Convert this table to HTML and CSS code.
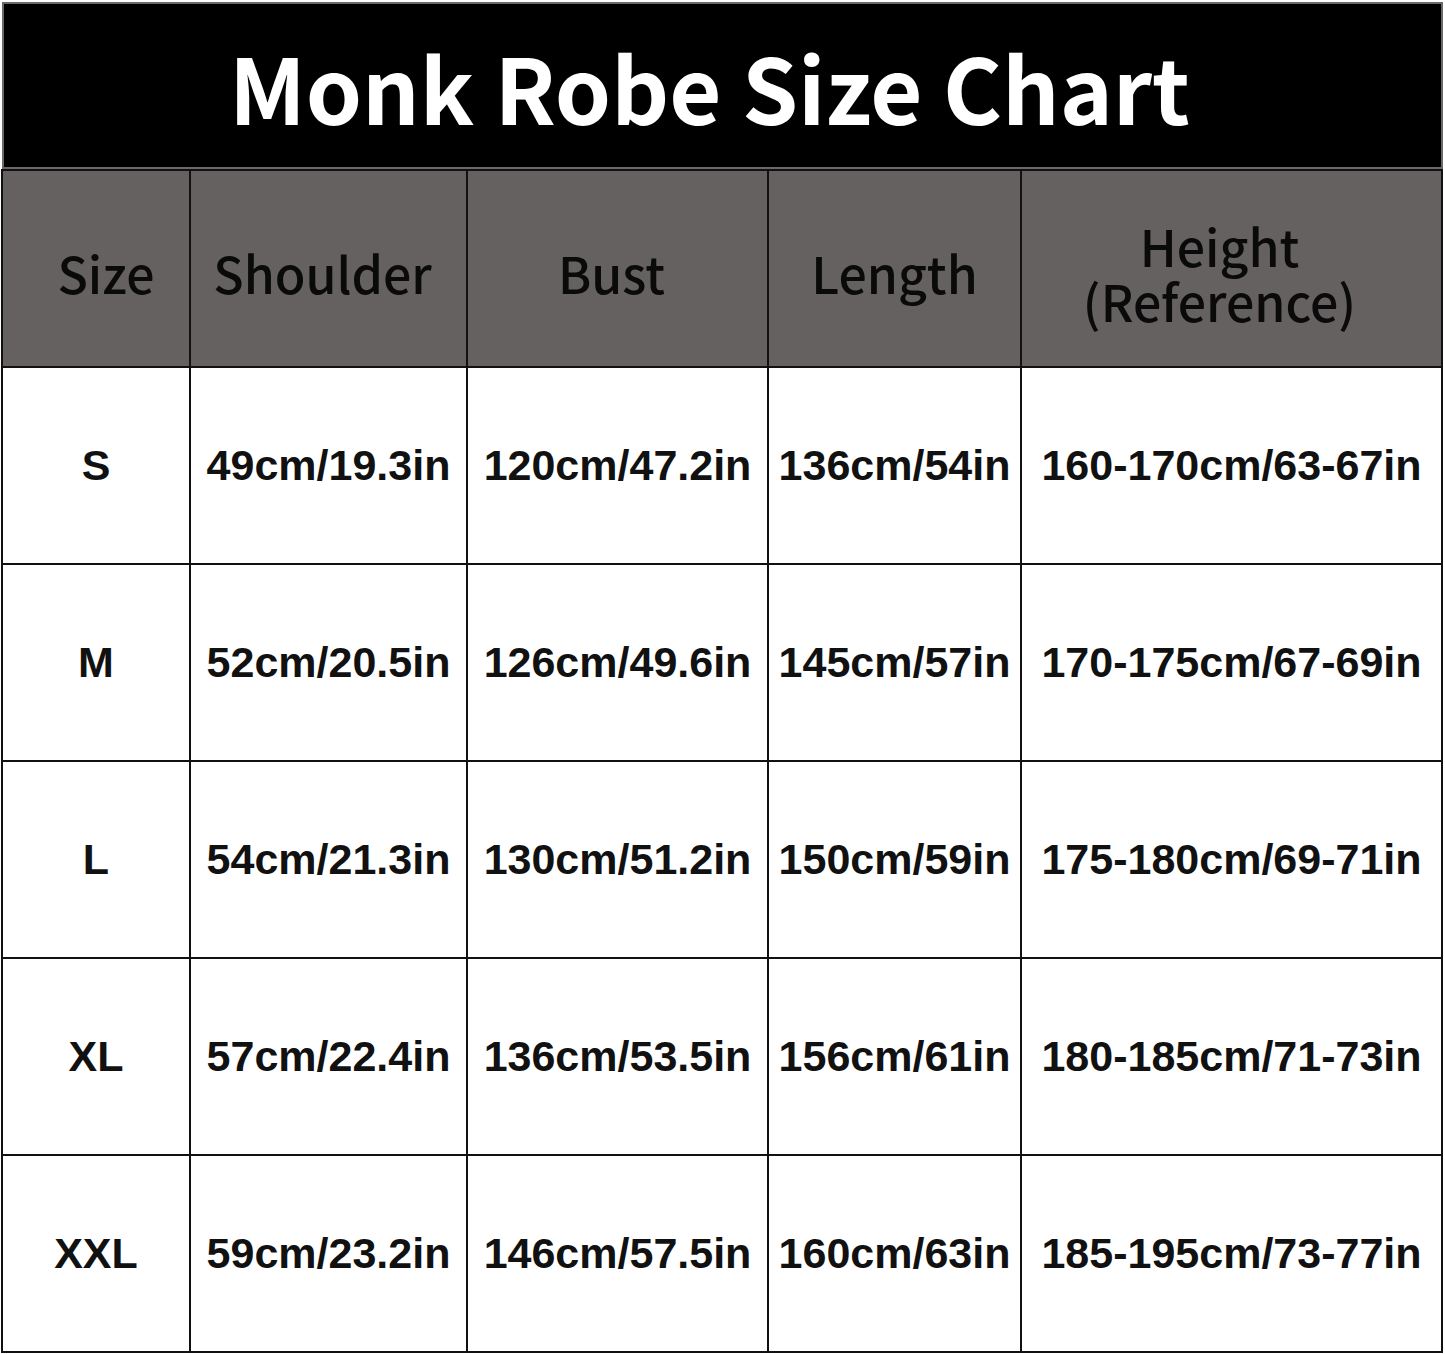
FILE: index.html
```html
<!DOCTYPE html>
<html>
<head>
<meta charset="utf-8">
<link rel="stylesheet" href="styles.css">
</head>
<body>
<div class="chart">
  <div class="title">Monk Robe Size Chart</div>
  <div class="grid">
    <div class="cell head c1">Size</div>
    <div class="cell head c2">Shoulder</div>
    <div class="cell head c3">Bust</div>
    <div class="cell head c4">Length</div>
    <div class="cell head c5">Height<br>(Reference)</div>

    <div class="cell">S</div>
    <div class="cell">49cm/19.3in</div>
    <div class="cell">120cm/47.2in</div>
    <div class="cell">136cm/54in</div>
    <div class="cell">160-170cm/63-67in</div>

    <div class="cell">M</div>
    <div class="cell">52cm/20.5in</div>
    <div class="cell">126cm/49.6in</div>
    <div class="cell">145cm/57in</div>
    <div class="cell">170-175cm/67-69in</div>

    <div class="cell">L</div>
    <div class="cell">54cm/21.3in</div>
    <div class="cell">130cm/51.2in</div>
    <div class="cell">150cm/59in</div>
    <div class="cell">175-180cm/69-71in</div>

    <div class="cell">XL</div>
    <div class="cell">57cm/22.4in</div>
    <div class="cell">136cm/53.5in</div>
    <div class="cell">156cm/61in</div>
    <div class="cell">180-185cm/71-73in</div>

    <div class="cell">XXL</div>
    <div class="cell">59cm/23.2in</div>
    <div class="cell">146cm/57.5in</div>
    <div class="cell">160cm/63in</div>
    <div class="cell">185-195cm/73-77in</div>
  </div>
</div>
</body>
</html>
```
FILE: styles.css
```css
html, body {
  margin: 0;
  padding: 0;
  background: #ffffff;
}
body {
  padding: 2px 0 0 1px;
}
.chart {
  width: 1442px;
}
.title {
  height: 163px;
  margin: 0 0 0 1px;
  width: 1437px;
  box-sizing: content-box;
  border: 2px solid #6a6a6a;
  background: #000;
  color: #fff;
  font-family: "Noto Sans CJK SC", "Noto Sans", sans-serif;
  font-weight: 700;
  font-size: 90px;
  display: flex;
  align-items: center;
  justify-content: center;
  padding-right: 0;
}
.title-text {
  display: block;
}
.title::after {
  content: "";
  width: 26px;
  flex: none;
}
.grid {
  display: grid;
  grid-template-columns: 186px 275px 299px 251px 419px;
  grid-template-rows: 195px repeat(5, 195px);
  gap: 2px;
  padding: 2px;
  background: #111;
}
.cell {
  background: #fff;
  display: flex;
  align-items: center;
  justify-content: center;
  text-align: center;
  font-family: "Liberation Sans", Arial, sans-serif;
  font-weight: 700;
  font-size: 43px;
  color: #111;
}
.head {
  background: #656161;
  font-family: "Noto Sans CJK SC", "Noto Sans", sans-serif;
  font-weight: 500;
  font-size: 50px;
  line-height: 55px;
  color: #0a0a0a;
  padding-top: 8px;
  box-sizing: border-box;
}
.c1 { padding-left: 20px; }
.c2 { padding-right: 12px; }
.c3 { padding-right: 12px; }
.c5 { padding-right: 24px; }
```
